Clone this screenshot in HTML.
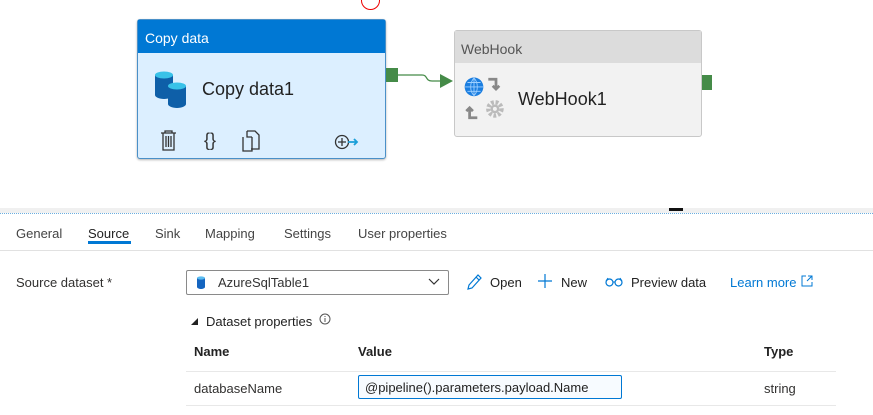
<!DOCTYPE html>
<html><head><meta charset="utf-8"><style>
*{margin:0;padding:0;box-sizing:border-box}
body{width:873px;height:415px;background:#fff;position:relative;overflow:hidden;font-family:"Segoe UI","Liberation Sans",sans-serif;color:#323130}
.a{position:absolute}
.t{font-size:13px;white-space:nowrap}
</style></head><body>
<div class="a" style="left:361px;top:-9px;width:19px;height:19px;border:1.5px solid #e00;border-radius:50%"></div>

<div class="a" style="left:137px;top:19px;width:249px;height:140px;border:1px solid #4a90c8;border-radius:3px;background:#dcefff;box-shadow:0 1px 2px rgba(0,0,0,.3)"></div>
<div class="a" style="left:138px;top:20px;width:247px;height:33px;background:#0078d4;color:#fff;font-size:14px;padding:10px 0 0 7px">Copy data</div>
<svg class="a" style="left:153px;top:70px" width="36" height="40" viewBox="0 0 36 40">
<path d="M2 5v20c0 2 4 4 9 4s9-2 9-4V5z" fill="#0e5fa8"/><ellipse cx="11" cy="5" rx="9" ry="3.5" fill="#39c2e8"/>
<path d="M15 16v18c0 2 4 4 9 4s9-2 9-4V16z" fill="#0e5fa8"/><ellipse cx="24" cy="16" rx="9" ry="3.5" fill="#39c2e8"/>
</svg>
<div class="a" style="left:202px;top:79px;font-size:18px;color:#222">Copy data1</div>
<svg class="a" style="left:160px;top:129px" width="200" height="24" viewBox="0 0 200 24" fill="none" stroke="#333" stroke-width="1.3">
<path d="M1 4h15M5 4V2h7v2M3 4v17h11V4M6 7v11M8.5 7v11M11 7v11"/>
<text x="44" y="17" font-size="18" fill="#333" stroke="none" font-family="Liberation Sans">{}</text>
<path d="M87 2h8l4 4v14h-8"/><path d="M92 8h-5l0 -6M92 8v14h-9V8"/>
<circle cx="182" cy="13" r="6.5"/><path d="M178 13h8M182 9v8"/><path d="M188 13h9M194 10l3 3-3 3" stroke="#1a9fd8" stroke-width="1.8"/>
</svg>
<div class="a" style="left:386px;top:68px;width:12px;height:14px;background:#458b48"></div>
<svg class="a" style="left:397px;top:70px" width="60" height="20"><path d="M0 5h25c6 0 3 6 10 6h8" stroke="#458b48" stroke-width="1.3" fill="none"/><path d="M43 4l13 7-13 7z" fill="#458b48"/></svg>

<div class="a" style="left:454px;top:30px;width:248px;height:107px;border:1px solid #c8c8c8;border-radius:3px;background:#f2f2f2"></div>
<div class="a" style="left:455px;top:31px;width:246px;height:32px;background:#dcdcdc;color:#555;font-size:14px;padding:10px 0 0 6px">WebHook</div>
<svg class="a" style="left:463px;top:77px" width="44" height="44" viewBox="0 0 40 40">
<circle cx="10" cy="9" r="8.5" fill="#1b7ee0"/><path d="M2 9h17M10 1v16M4 5h12M4 13h12M10 1c-4 4-4 12 0 16M10 1c4 4 4 12 0 16" stroke="#9fd0ff" stroke-width=".8" fill="none"/>
<path d="M23 2h7v8M27 8l3 3 3-3" stroke="#888" stroke-width="2.5" fill="none"/>
<path d="M13 37H6v-8M3 31l3-3 3 3" stroke="#888" stroke-width="2.5" fill="none"/>
<circle cx="29" cy="29" r="6" fill="none" stroke="#bbb" stroke-width="4" stroke-dasharray="2.5 1.6"/><circle cx="29" cy="29" r="4" fill="#bbb"/><circle cx="29" cy="29" r="1.8" fill="#f2f2f2"/>
</svg>
<div class="a" style="left:518px;top:89px;font-size:18px;color:#222">WebHook1</div>
<div class="a" style="left:702px;top:75px;width:10px;height:15px;background:#458b48"></div>

<div class="a" style="left:0;top:208px;width:873px;height:5px;background:#f0f0f0"></div>
<div class="a" style="left:669px;top:208px;width:14px;height:3px;background:#111"></div>
<div class="a" style="left:0;top:213px;width:873px;border-top:1px dotted #6aaee0"></div>

<div class="a t" style="left:16px;top:226px;color:#444">General</div>
<div class="a t" style="left:88px;top:226px;color:#222">Source</div>
<div class="a t" style="left:155px;top:226px;color:#444">Sink</div>
<div class="a t" style="left:205px;top:226px;color:#444">Mapping</div>
<div class="a t" style="left:284px;top:226px;color:#444">Settings</div>
<div class="a t" style="left:358px;top:226px;color:#444">User properties</div>
<div class="a" style="left:88px;top:241px;width:43px;height:3px;background:#0078d4"></div>
<div class="a" style="left:0;top:250px;width:873px;height:1px;background:#e1e1e1"></div>

<div class="a t" style="left:16px;top:275px">Source dataset *</div>
<div class="a" style="left:186px;top:270px;width:263px;height:25px;border:1px solid #8a8a8a;border-radius:2px"></div>
<svg class="a" style="left:196px;top:276px" width="10" height="13"><path d="M1 2v9c0 1 2 2 4 2s4-1 4-2V2z" fill="#1565c0"/><ellipse cx="5" cy="2" rx="4" ry="1.6" fill="#5bbcf0"/></svg>
<div class="a t" style="left:218px;top:275px;color:#333">AzureSqlTable1</div>
<svg class="a" style="left:428px;top:278px" width="12" height="8"><path d="M1 1l5 5 5-5" stroke="#333" fill="none" stroke-width="1.2"/></svg>
<svg class="a" style="left:466px;top:273px" width="16" height="18"><path d="M2 16l1-4 9-10 3 3-9 10z M10 4l3 3" stroke="#0078d4" fill="none" stroke-width="1.2"/></svg>
<div class="a t" style="left:490px;top:275px;color:#222">Open</div>
<svg class="a" style="left:538px;top:274px" width="14" height="14"><path d="M7 0v14M0 7h14" stroke="#0078d4" stroke-width="1.2"/></svg>
<div class="a t" style="left:561px;top:275px;color:#222">New</div>
<svg class="a" style="left:605px;top:277px" width="18" height="10"><circle cx="4.5" cy="5.5" r="3.5" stroke="#0078d4" fill="none" stroke-width="1.2"/><circle cx="13.5" cy="5.5" r="3.5" stroke="#0078d4" fill="none" stroke-width="1.2"/><path d="M8 5h2M1 4l2-3M17 4l-2-3" stroke="#0078d4" fill="none"/></svg>
<div class="a t" style="left:631px;top:275px;color:#222">Preview data</div>
<div class="a t" style="left:730px;top:275px;color:#0078d4">Learn more</div>
<svg class="a" style="left:801px;top:275px" width="12" height="12"><path d="M5 1H1v10h10V7M7 1h4v4M11 1L6 6" stroke="#0078d4" fill="none"/></svg>

<svg class="a" style="left:191px;top:318px" width="8" height="8"><path d="M0 7h7V0z" fill="#222"/></svg>
<div class="a t" style="left:206px;top:314px;color:#222">Dataset properties</div>
<svg class="a" style="left:319px;top:313px" width="12" height="12"><circle cx="6" cy="6" r="5" stroke="#555" fill="none"/><path d="M6 5v4M6 3v1" stroke="#555"/></svg>
<div class="a t" style="left:194px;top:344px;font-weight:bold;color:#222">Name</div>
<div class="a t" style="left:358px;top:344px;font-weight:bold;color:#222">Value</div>
<div class="a t" style="left:764px;top:344px;font-weight:bold;color:#222">Type</div>
<div class="a" style="left:186px;top:371px;width:650px;height:1px;background:#e8e8e8"></div>
<div class="a t" style="left:194px;top:381px">databaseName</div>
<div class="a" style="left:358px;top:375px;width:264px;height:24px;border:1px solid #0078d4;border-radius:2px;background:#f7fbff"></div>
<div class="a t" style="left:365px;top:380px;color:#222">@pipeline().parameters.payload.Name</div>
<div class="a t" style="left:764px;top:381px">string</div>
<div class="a" style="left:186px;top:405px;width:650px;height:1px;background:#e8e8e8"></div>
</body></html>
